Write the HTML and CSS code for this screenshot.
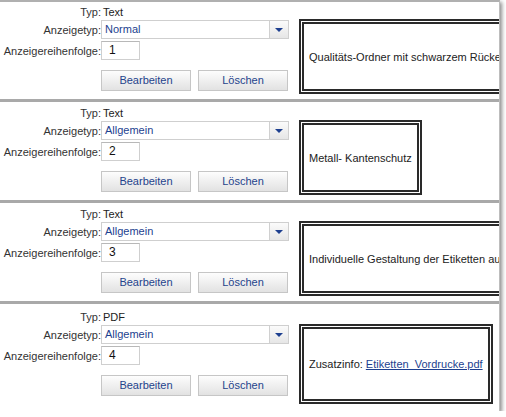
FILE: index.html
```html
<!DOCTYPE html>
<html lang="de">
<head>
<meta charset="utf-8">
<title>Anzeige</title>
<link rel="stylesheet" href="styles.css">
</head>
<body>
<div class="panel">
  <div class="section first">
    <div class="form">
      <div class="row"><span class="label">Typ:</span><span class="value">Text</span></div>
      <div class="row"><span class="label">Anzeigetyp:</span><div class="select"><span class="sel-text">Normal</span><span class="sel-btn"><span class="tri"></span></span></div></div>
      <div class="row"><span class="label">Anzeigereihenfolge:</span><div class="input">1</div></div>
      <div class="buttons"><span class="btn">Bearbeiten</span><span class="btn">Löschen</span></div>
    </div>
    <div class="box">Qualitäts-Ordner mit schwarzem Rückenschild und Einsteckfach</div>
  </div>
  <div class="section">
    <div class="form">
      <div class="row"><span class="label">Typ:</span><span class="value">Text</span></div>
      <div class="row"><span class="label">Anzeigetyp:</span><div class="select"><span class="sel-text">Allgemein</span><span class="sel-btn"><span class="tri"></span></span></div></div>
      <div class="row"><span class="label">Anzeigereihenfolge:</span><div class="input">2</div></div>
      <div class="buttons"><span class="btn">Bearbeiten</span><span class="btn">Löschen</span></div>
    </div>
    <div class="box">Metall- Kantenschutz</div>
  </div>
  <div class="section">
    <div class="form">
      <div class="row"><span class="label">Typ:</span><span class="value">Text</span></div>
      <div class="row"><span class="label">Anzeigetyp:</span><div class="select"><span class="sel-text">Allgemein</span><span class="sel-btn"><span class="tri"></span></span></div></div>
      <div class="row"><span class="label">Anzeigereihenfolge:</span><div class="input">3</div></div>
      <div class="buttons"><span class="btn">Bearbeiten</span><span class="btn">Löschen</span></div>
    </div>
    <div class="box">Individuelle Gestaltung der Etiketten auf Anfrage möglich</div>
  </div>
  <div class="section last">
    <div class="form">
      <div class="row"><span class="label">Typ:</span><span class="value">PDF</span></div>
      <div class="row"><span class="label">Anzeigetyp:</span><div class="select"><span class="sel-text">Allgemein</span><span class="sel-btn"><span class="tri"></span></span></div></div>
      <div class="row"><span class="label">Anzeigereihenfolge:</span><div class="input">4</div></div>
      <div class="buttons"><span class="btn">Bearbeiten</span><span class="btn">Löschen</span></div>
    </div>
    <div class="box">Zusatzinfo: <a class="link" href="#">Etiketten_Vordrucke.pdf</a></div>
  </div>
</div>
</body>
</html>
```
FILE: styles.css
```css
html, body {
  margin: 0;
  padding: 0;
  background: #ffffff;
}
body {
  font-family: "Liberation Sans", Arial, sans-serif;
  font-size: 11px;
  color: #222;
}
.panel {
  width: 499px;
  height: 409px;
  overflow: hidden;
  background: #fff;
  border-top: 2px solid #b0b0b0;
  border-right: 1px solid #bdbdbd;
  box-shadow: 2px 2px 4px rgba(0, 0, 0, 0.45);
}
.section {
  display: flex;
  align-items: flex-start;
  padding: 5px 0 5px 0;
  border-bottom: 3px solid #a9a9a9;
}
.section.first {
  padding-top: 4px;
}
.section.last {
  padding-top: 7px;
  border-bottom: none;
}
.form {
  flex: none;
  width: 289px;
}
.row {
  display: grid;
  grid-template-columns: 101px auto;
  align-items: center;
  margin-bottom: 2px;
}
.row:first-child {
  margin-bottom: 1px;
  line-height: 13px;
}
.label {
  text-align: right;
  color: #333;
}
.value {
  padding-left: 2px;
  color: #222;
}
.select {
  display: flex;
  height: 17px;
  border: 1px solid #cfcfcf;
  background: #fff;
}
.sel-text {
  flex: 1;
  padding-left: 3px;
  line-height: 17px;
  color: #1d3f8f;
}
.sel-btn {
  width: 18px;
  border-left: 1px solid #d0d0d0;
  background: linear-gradient(#fbfbfb, #e6e6e6);
  display: flex;
  align-items: center;
  justify-content: center;
}
.tri {
  width: 0;
  height: 0;
  border-left: 4px solid transparent;
  border-right: 4px solid transparent;
  border-top: 4px solid #1d3f8f;
}
.input {
  width: 30px;
  height: 17px;
  line-height: 17px;
  padding-left: 7px;
  border: 1px solid #cfcfcf;
  border-top-color: #b8b8b8;
  color: #111;
  font-size: 12px;
}
.buttons {
  display: flex;
  gap: 7px;
  margin-top: 10px;
  padding-left: 101px;
}
.btn {
  width: 88px;
  height: 19px;
  line-height: 19px;
  text-align: center;
  border: 1px solid #c6c6c6;
  background: linear-gradient(#fdfdfd, #e2e2e2);
  color: #24438c;
}
.box {
  flex: none;
  margin-left: 10px;
  margin-top: 13px;
  height: 65px;
  display: flex;
  align-items: center;
  padding: 0 5px;
  border: 5px double #2a2a2a;
  white-space: nowrap;
  color: #222;
}
.last .box {
  height: 70px;
}
.link {
  color: #1d3f8f;
  text-decoration: underline;
  margin-left: 3px;
}
```
